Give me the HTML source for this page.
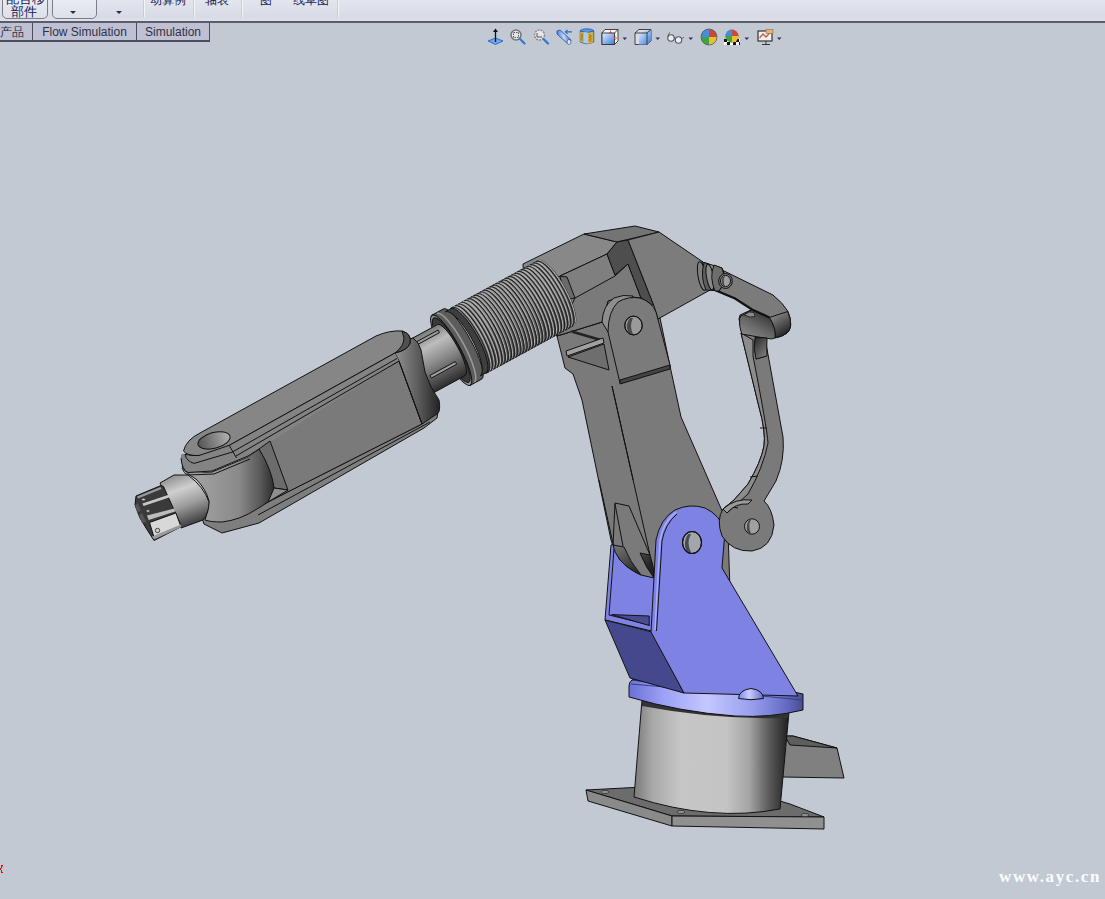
<!DOCTYPE html>
<html><head><meta charset="utf-8">
<style>
html,body{margin:0;padding:0;width:1105px;height:899px;overflow:hidden;background:#c3c9d3;font-family:"Liberation Sans",sans-serif;}
#tb{position:absolute;left:0;top:0;width:1105px;height:21px;background:linear-gradient(#e4e6ee 0%,#d8dae6 80%,#dfe1ea 100%);border-bottom:2px solid #5a5e6a;}
.btn{position:absolute;top:-6px;height:25px;border:1px solid #7a7e88;border-radius:5px;background:linear-gradient(#eceef4,#dde0ea);box-sizing:border-box;}
.sep{position:absolute;top:0;width:1px;height:17px;background:#c8ccd6;border-right:1px solid #f4f5f8;}
.arr{position:absolute;top:11px;width:0;height:0;border-left:3px solid transparent;border-right:3px solid transparent;border-top:3px solid #2a2e48;}
.tt{position:absolute;top:-8px;font-size:12px;color:#141a58;white-space:nowrap;}
#tabs{position:absolute;top:23px;left:0;height:19px;}
.tab{position:absolute;top:0;height:17px;background:#bfc0d4;border:1px solid #4a4e5a;border-top:none;border-bottom:2px solid #4a4e5a;box-sizing:content-box;font-size:12px;color:#2e3144;line-height:19px;text-align:center;}
#vt{position:absolute;top:27px;left:483px;}
svg{position:absolute;left:0;top:0;}
</style></head>
<body>
<div id="tb">
  <div class="btn" style="left:2px;width:46px;"></div>
  <div class="tt" style="left:6px;top:-10px;font-size:13px;">配合移</div>
  <div class="tt" style="left:11px;top:3px;font-size:13px;">部件</div>
  <div class="btn" style="left:52px;width:45px;"></div>
  <div class="arr" style="left:70px;"></div>
  <div class="arr" style="left:116px;"></div>
  <div class="sep" style="left:143px;"></div>
  <div class="tt" style="left:150px;">动算例</div>
  <div class="sep" style="left:193px;"></div>
  <div class="tt" style="left:205px;">轴表</div>
  <div class="sep" style="left:241px;"></div>
  <div class="tt" style="left:260px;">图</div>
  <div class="tt" style="left:293px;">线草图</div>
  <div class="sep" style="left:337px;"></div>
</div>
<div id="tabs">
  <div class="tab" style="left:-5px;width:36px;text-align:left;text-indent:4px;">产品</div>
  <div class="tab" style="left:32px;width:103px;">Flow Simulation</div>
  <div class="tab" style="left:136px;width:72px;">Simulation</div>
</div>
<svg id="icons" width="320" height="24" viewBox="480 26 320 24" style="position:absolute;left:480px;top:26px;">
<defs>
<linearGradient id="iB" x1="0" y1="0" x2="1" y2="1"><stop offset="0" stop-color="#e8f2ff"/><stop offset="1" stop-color="#3a7ad8"/></linearGradient>
<linearGradient id="iB2" x1="0" y1="0" x2="1" y2="0"><stop offset="0" stop-color="#4a86e0"/><stop offset="0.5" stop-color="#bcd8ff"/><stop offset="1" stop-color="#3a6ac8"/></linearGradient>
</defs>
<!-- 1 axis plane -->
<polygon points="488,41 495.5,38 503,41 495.5,44.5" fill="#6aa8f0" stroke="#2a5ab0" stroke-width="0.8"/>
<line x1="495.5" y1="42" x2="495.5" y2="30" stroke="#111" stroke-width="1.3"/>
<polygon points="493,32 495.5,28.5 498,32" fill="#111"/>
<!-- 2 zoom fit -->
<circle cx="516" cy="35" r="5" fill="#e6e6ea" stroke="#777" stroke-width="1.6"/>
<rect x="513.5" y="32.5" width="5" height="5" fill="none" stroke="#444" stroke-width="0.9" stroke-dasharray="1.5 1"/>
<line x1="520" y1="39" x2="524.5" y2="43.5" stroke="#3a78d0" stroke-width="2.4" stroke-linecap="round"/>
<!-- 3 zoom area -->
<circle cx="539.5" cy="35" r="5" fill="#e6e6ea" stroke="#888" stroke-width="1.4" stroke-dasharray="2 1"/>
<path d="M537,33 v4 h5" fill="none" stroke="#444" stroke-width="0.9"/>
<line x1="543.5" y1="39" x2="548" y2="43.5" stroke="#3a78d0" stroke-width="2.4" stroke-linecap="round"/>
<!-- 4 previous view -->
<path d="M557,31 L560,30 L571,40 Q571,44 568,44 L557,34 Z" fill="url(#iB2)" stroke="#2a4a90" stroke-width="0.8"/>
<ellipse cx="569" cy="42" rx="2" ry="2.5" fill="#dbeaff" stroke="#2a4a90" stroke-width="0.6"/>
<path d="M572,31.8 L565.5,31.8 M567.5,29.8 L565.5,31.8 L567.5,33.8" fill="none" stroke="#2a6ad0" stroke-width="1.2"/>
<!-- 5 section -->
<ellipse cx="587" cy="31" rx="6.8" ry="2.2" fill="#5a9ae8" stroke="#2a4a90" stroke-width="0.7"/>
<path d="M580.2,31 L580.2,42 Q587,45.5 593.8,42 L593.8,31 Q587,34 580.2,31 Z" fill="#7ab0f0" stroke="#2a4a90" stroke-width="0.7"/>
<path d="M583.5,32 L588.2,32.5 L588.2,43.5 L583.5,43 Z" fill="#a8ccf8"/>
<path d="M580.4,32 L583.5,32.5 L583.5,42.5 L580.4,41.5 Z" fill="#e0b020"/>
<path d="M588.2,33 L592.8,32.2 L592.8,42.5 L588.2,44 Z" fill="#e0b020"/>
<path d="M581,33.5 l2,1.4 -2,1.4 2,1.4 -2,1.4 2,1.4 M589,34.5 l2.5,1.4 -2.5,1.4 2.5,1.4 -2.5,1.4 2.5,1.4" fill="none" stroke="#8a4a10" stroke-width="0.6"/>
<!-- 6 view orientation -->
<path d="M602,33 L605,29.5 L618,29.5 L618,41 L614.5,44.5 L602,44.5 Z" fill="#f4f4f6" stroke="#333" stroke-width="0.9"/>
<rect x="602" y="33" width="12.5" height="11.5" fill="url(#iB)" stroke="#333" stroke-width="0.9"/>
<path d="M614.5,33 L618,29.5" stroke="#333" stroke-width="0.9"/>
<path d="M610.5,30.5 v3 M609,32 l1.5,1.5 1.5,-1.5 M617,38 h-3 M615.5,36.5 l-1.5,1.5 1.5,1.5" fill="none" stroke="#e03030" stroke-width="0.8"/>
<polygon points="622.5,37.5 627,37.5 624.75,40" fill="#2a2e60"/>
<!-- 7 display style -->
<path d="M635,33 L639,29.5 L651,29.5 L651,41 L647,44.5 L635,44.5 Z" fill="#dadde6" stroke="#333" stroke-width="0.9"/>
<path d="M639,33 L651,29.5 L651,41 L647,44.5 L639,44.5 Z" fill="url(#iB)"/>
<path d="M635,33 L647,33 L651,29.5 M647,33 L647,44.5" fill="none" stroke="#333" stroke-width="0.9"/>
<polygon points="655.5,37.5 660,37.5 657.75,40" fill="#2a2e60"/>
<!-- 8 glasses -->
<circle cx="671" cy="38" r="3.2" fill="#e8eef8" stroke="#555" stroke-width="1.1"/>
<circle cx="678.5" cy="40" r="3.2" fill="#e8eef8" stroke="#555" stroke-width="1.1"/>
<path d="M674,37.5 Q675,37 675.5,39 M668,37 Q668,33 670,32.5 M681.5,39 Q683,37 684,37.5" fill="none" stroke="#555" stroke-width="0.9"/>
<polygon points="688.5,37.5 693,37.5 690.75,40" fill="#2a2e60"/>
<!-- 9 appearance ball -->
<circle cx="709" cy="37" r="8" fill="#c84a3a"/>
<path d="M709,37 L709,29 A8,8 0 0 0 701,37 Z" fill="#4a8ae0"/>
<path d="M709,37 L701,37 A8,8 0 0 0 709,45 Z" fill="#3aa840"/>
<path d="M709,37 L709,45 A8,8 0 0 0 717,37 Z" fill="#e8c030"/>
<circle cx="709" cy="37" r="8" fill="none" stroke="#555" stroke-width="0.7"/>
<!-- 10 scene -->
<rect x="724" y="39" width="16" height="6" fill="#fff"/>
<path d="M724,39 h3 v3 h-3z M730,39 h3 v3 h-3z M736,39 h3 v3 h-3z M727,42 h3 v3 h-3z M733,42 h3 v3 h-3z M739,42 h1 v3 h-1z" fill="#111"/>
<circle cx="732" cy="36" r="6.5" fill="#c84a3a"/>
<path d="M732,36 L732,29.5 A6.5,6.5 0 0 0 725.5,36 Z" fill="#4a8ae0"/>
<path d="M732,36 L725.5,36 A6.5,6.5 0 0 0 732,42.5 Z" fill="#3aa840"/>
<path d="M732,36 L732,42.5 A6.5,6.5 0 0 0 738.5,36 Z" fill="#e8c030"/>
<polygon points="744.5,37.5 749,37.5 746.75,40" fill="#2a2e60"/>
<!-- 11 monitor -->
<rect x="758" y="31" width="14" height="10" fill="#f0f0f2" stroke="#333" stroke-width="1.2"/>
<path d="M759.5,38 L763,34 L766,37 L771,31.5" fill="none" stroke="#c06040" stroke-width="1.3"/>
<rect x="766" y="29.5" width="7" height="4" fill="#e6b070" stroke="#806040" stroke-width="0.5"/>
<path d="M762,44.5 h8 M766,41 v3.5" stroke="#333" stroke-width="1"/>
<polygon points="777,37.5 781.5,37.5 779.25,40" fill="#2a2e60"/>
</svg>
<svg width="1105" height="899" viewBox="0 0 1105 899" id="arm">
<defs>
<linearGradient id="gCyl" gradientUnits="userSpaceOnUse" x1="634" y1="0" x2="788" y2="0">
 <stop offset="0" stop-color="#7a7a7a"/><stop offset="0.12" stop-color="#a8a8a8"/><stop offset="0.3" stop-color="#c6c6c6"/><stop offset="0.6" stop-color="#c4c4c4"/><stop offset="0.75" stop-color="#a4a4a4"/><stop offset="0.87" stop-color="#5e5e5e"/><stop offset="1" stop-color="#222"/>
</linearGradient>
<linearGradient id="gFl" gradientUnits="userSpaceOnUse" x1="629" y1="0" x2="803" y2="0">
 <stop offset="0" stop-color="#6a70d6"/><stop offset="0.2" stop-color="#9ca2f6"/><stop offset="0.45" stop-color="#c4c7ff"/><stop offset="0.7" stop-color="#9aa0ee"/><stop offset="0.9" stop-color="#666cc4"/><stop offset="1" stop-color="#484c94"/>
</linearGradient>
<linearGradient id="gKn" x1="0" y1="0" x2="1" y2="0">
 <stop offset="0" stop-color="#a2a2a2"/><stop offset="0.4" stop-color="#8a8a8a"/><stop offset="0.8" stop-color="#505050"/><stop offset="1" stop-color="#2a2a2a"/>
</linearGradient>
<linearGradient id="gKnL" gradientUnits="userSpaceOnUse" x1="195" y1="0" x2="274" y2="0">
 <stop offset="0" stop-color="#a2a2a2"/><stop offset="0.55" stop-color="#8a8a8a"/><stop offset="0.82" stop-color="#5a5a5a"/><stop offset="1" stop-color="#2e2e2e"/>
</linearGradient>
<linearGradient id="gCap" gradientUnits="userSpaceOnUse" x1="398" y1="0" x2="440" y2="0">
 <stop offset="0" stop-color="#8a8a8a"/><stop offset="0.5" stop-color="#5a5a5a"/><stop offset="1" stop-color="#222"/>
</linearGradient>
<linearGradient id="gShaft" gradientUnits="userSpaceOnUse" x1="428" y1="325" x2="452" y2="390">
 <stop offset="0" stop-color="#8a8a8a"/><stop offset="0.3" stop-color="#c4c4c4"/><stop offset="0.65" stop-color="#7a7a7a"/><stop offset="1" stop-color="#333"/>
</linearGradient>
<linearGradient id="gWr" gradientUnits="userSpaceOnUse" x1="172" y1="474" x2="192" y2="528">
 <stop offset="0" stop-color="#8a8a8a"/><stop offset="0.3" stop-color="#cfcfcf"/><stop offset="0.6" stop-color="#9a9a9a"/><stop offset="1" stop-color="#2e2e2e"/>
</linearGradient>
<linearGradient id="gThr" gradientUnits="userSpaceOnUse" x1="495" y1="285" x2="530" y2="350">
 <stop offset="0" stop-color="#8c8c8c"/><stop offset="0.5" stop-color="#6e6e6e"/><stop offset="1" stop-color="#3a3a3a"/>
</linearGradient>
<linearGradient id="gDark" x1="0" y1="0" x2="1" y2="1">
 <stop offset="0" stop-color="#5a5a5a"/><stop offset="1" stop-color="#2c2c2c"/>
</linearGradient>
<linearGradient id="gArmBot" gradientUnits="userSpaceOnUse" x1="610" y1="530" x2="650" y2="580">
 <stop offset="0" stop-color="#7a7a7a"/><stop offset="1" stop-color="#2e2e2e"/>
</linearGradient>
</defs>
<style>
#arm .o{stroke:#121212;stroke-width:1;stroke-linejoin:round;}
#arm .l{fill:none;stroke:#121212;stroke-width:1;}
.ring{fill:none;stroke:#262626;stroke-width:1.2;}
</style>

<!-- right wedge behind base -->
<polygon class="o" points="785,736 793,736 837,748 844,778 782,777" fill="#808080"/>
<polygon class="o" points="785,736 793,736 837,748 790,745" fill="#5e5e5e"/>

<!-- base plate -->
<polygon class="o" points="586,790 720,783 790,804 824,817 672,816" fill="#6c6c6c"/>
<polygon class="o" points="586,790 672,816 672,826 588,801" fill="#8a8a8a"/>
<polygon class="o" points="672,816 824,817 824,829 672,826" fill="#909090"/>
<ellipse cx="605" cy="792" rx="4" ry="1.5" fill="#999" stroke="#222" stroke-width="0.7"/>
<ellipse cx="681" cy="812" rx="4" ry="1.5" fill="#999" stroke="#222" stroke-width="0.7"/>
<ellipse cx="805" cy="815" rx="4" ry="1.5" fill="#999" stroke="#222" stroke-width="0.7"/>

<!-- cylinder -->
<path class="o" d="M642,700 L789,712 L780,809 Q712,822 634,797 Z" fill="url(#gCyl)"/>
<path d="M642,706 Q716,720 788,718 L789,712 L642,700 Z" fill="#333"/>

<!-- flange -->
<path class="o" d="M632,680 Q640,677 660,676 Q740,678 803,694 L803,710 Q770,718 735,716 Q680,712 629,697 L629,686 Q629,682 632,680 Z" fill="url(#gFl)"/>
<path d="M631,684 Q700,690 803,700" fill="none" stroke="#3a3e80" stroke-width="1"/>
<path d="M632,680 Q660,683 684,693" fill="none" stroke="#2a2e70" stroke-width="1"/>

<!-- lower arm (side & front) -->
<polygon class="o" points="557,336 602,322 660,318 670,366 681,417 723,513 728,532 730,590 651,578 630,570 616,556 611,540 582,400 573,374 565,368" fill="#7a7a7a"/>
<polyline class="l" points="612,386 650,555"/>
<!-- blue pedestal back frame -->
<polygon class="o" points="605,620 611,545 660,532 656,632" fill="#7e82e2"/>
<polyline class="l" points="609,615 614,549"/>
<polyline class="l" points="609,615 650,625"/>
<polygon class="o" points="611.6,614.6 649.2,616 649.2,625.5" fill="#4a4c92"/>
<path d="M599,480 L612,539 Q614,550 620,560 Q628,569 641,575 L654,578 L662,545 L664,480 Z" fill="#7a7a7a"/>
<path class="l" d="M599,480 L612,539 Q614,550 620,560 Q628,569 641,575 L654,578"/>
<linearGradient id="gCres" gradientUnits="userSpaceOnUse" x1="618" y1="548" x2="638" y2="575"><stop offset="0" stop-color="#6e6e6e"/><stop offset="1" stop-color="#222"/></linearGradient>
<path class="o" d="M613,545 L624,547 Q630,562 641,575 Q628,569 620,560 Q614,552 613,545 Z" fill="url(#gCres)"/>
<path class="o" d="M640,553 L650,555 Q654,566 654,578 Q646,568 640,553 Z" fill="url(#gCres)"/>
<polyline class="l" points="613,545 615,503 629,506 650,555"/>
<polyline class="l" points="623,546 615,504"/>
<polyline class="l" points="612,386 650,555"/>
<!-- blue pedestal front -->
<polygon class="o" points="605,620 652,632 684,693 630,678" fill="#46488e"/>
<path class="o" d="M651,632 L656,540 Q660,519 675,510 Q690,503 705,508 Q720,515 725,531 L722,568 L798,696 L684,693 Z" fill="#7e82e2"/>
<path d="M655,630 L660,541 Q663,522 676,512" fill="none" stroke="#a8acf8" stroke-width="1.6"/>
<path class="l" d="M656.5,631 L662,541 Q665,524 677,514"/>
<ellipse class="o" cx="692" cy="542.5" rx="9.5" ry="11" fill="#a4a4ac"/>
<path d="M688,534 Q683,542 686,550 Q689,553 691,552 Q686,543 691,534 Z" fill="#4a4a55"/>
<ellipse cx="692" cy="542.5" rx="9.5" ry="11" fill="none" stroke="#111" stroke-width="1.2"/>
<!-- dome bolt -->
<linearGradient id="gDome" gradientUnits="userSpaceOnUse" x1="740" y1="0" x2="763" y2="0"><stop offset="0" stop-color="#8a90ee"/><stop offset="0.4" stop-color="#c8ccff"/><stop offset="1" stop-color="#6a70c8"/></linearGradient>
<path class="o" d="M738.5,698.5 Q739,690 751,688.5 Q763,690 763.5,698.5 Q751,701 738.5,698.5 Z" fill="url(#gDome)"/>

<!-- right link -->
<path class="o" d="M741,333 L759,407 Q766,432 764,446 Q761,462 748,484 L734,500 L723,509 Q716,520 722,536 Q732,552 752,551 Q772,548 774,525 Q772,508 764,501 L776,481 Q785,460 783,437 L765,338 Z" fill="#7a7a7a"/>
<path class="o" d="M741,333 L759,407 Q766,432 764,446 Q761,462 748,484 L734,500 L723,509 L727,513 L748,494 Q763,468 768,443 Q767,428 753,356 L753,340 Z" fill="#8c8c8c"/>
<polyline class="l" points="756,359 766,356"/>
<polyline class="l" points="760,428 767,428"/>
<polyline class="l" points="750,477 758,476"/>
<polyline class="l" points="727,506 738,508"/>
<path class="o" d="M723,509 Q735,498 752,500 L748,504 Q735,503 727,513 Z" fill="#9a9a9a"/>
<ellipse class="o" cx="752" cy="526.5" rx="7.5" ry="7.7" fill="#a0a0a0"/>
<path d="M749,520 Q745,526 748,533 Q750,534 751,533.5 Q747.5,526 751,519.5 Z" fill="#4a4a4a"/>
<!-- top arm of link -->
<path class="o" d="M720,269 L773,295 Q783,303 788,311.5 Q791,318 790.7,325 Q790,331 787,333 Q782,337 775,338 L742,334 L739,319 L740,315 L752,309.5 L735,298.5 L716,290.5 Z" fill="#7b7b7b"/>
<linearGradient id="gUnd" gradientUnits="userSpaceOnUse" x1="765" y1="312" x2="750" y2="338"><stop offset="0" stop-color="#353535"/><stop offset="0.6" stop-color="#6a6a6a"/><stop offset="1" stop-color="#858585"/></linearGradient>
<path class="o" d="M739.5,319 Q740,315 743,315 L746,313.5 L752,309.5 L769.5,317.5 Q776,328 775.4,337.5 L771.7,339 L759.5,337.2 L741.7,334 Q739,326 739.5,319 Z" fill="url(#gUnd)"/>
<path d="M744,315 L749,312 L754,312.5 L755,316.5 L750,317 Z" fill="#8a8a8a" stroke="#111" stroke-width="0.7"/>
<linearGradient id="gCapL" gradientUnits="userSpaceOnUse" x1="775" y1="313" x2="789" y2="334"><stop offset="0" stop-color="#8a8a8a"/><stop offset="1" stop-color="#1e1e1e"/></linearGradient>
<path class="o" d="M769.5,317.5 L787.6,311.5 Q791,318 790.7,325 Q790,331 787,333 Q782,337 775.4,337.5 Q776,328 769.5,317.5 Z" fill="url(#gCapL)"/>
<polyline points="716,290.5 735,298.5 752,309.5 769.5,317.5" fill="none" stroke="#111" stroke-width="2.2"/>
<linearGradient id="gRodT" gradientUnits="userSpaceOnUse" x1="755" y1="337" x2="770" y2="350"><stop offset="0" stop-color="#2a2a2a"/><stop offset="1" stop-color="#7a7a7a"/></linearGradient>
<path class="o" d="M755,337.5 L767,338 Q766.5,348 767,356 L756,359 Q753,348 755,337.5 Z" fill="url(#gRodT)"/>
<!-- elbow housing -->
<polygon class="o" points="523,264 584,234 617,242 607,254 560,276 540,292 525,300" fill="#888888"/>
<polygon class="o" points="584,234 635,226 659,232 617,242" fill="#747474"/>
<polygon class="o" points="560,276 607,254 615,275 628,264 641,298 623,296 608,301 602,322 557,336 530,320 540,292" fill="#7f7f7f"/>
<polygon class="o" points="575,298 615,276 628,264 641,298 623,296 608,301 602,322 557,336" fill="#7a7a7a"/>
<polygon class="o" points="560,276 567,277 575,298 565,300" fill="#6a6a6a"/>
<polygon class="o" points="607,254 617,242 628,240 654,306 641,298 628,264 615,275" fill="#4e4e4e"/>
<polygon class="o" points="628,240 659,232 703,262 710,290 658,319 654,306" fill="#7c7c7c"/>
<!-- pin -->
<linearGradient id="gPin" gradientUnits="userSpaceOnUse" x1="0" y1="262" x2="0" y2="291"><stop offset="0" stop-color="#8a8a8a"/><stop offset="0.5" stop-color="#9a9a9a"/><stop offset="1" stop-color="#3a3a3a"/></linearGradient>
<path class="o" d="M702,262 L722,268 Q729,280 719,291 L708,290 Z" fill="url(#gPin)"/>
<ellipse class="o" cx="702" cy="276" rx="4" ry="14.5" transform="rotate(-10 702 276)" fill="#7e7e7e"/>
<path class="o" d="M704,262.5 L709,264 Q705,277 711,290.5 L706,290 Q700,277 704,262.5 Z" fill="#5e5e5e"/>
<ellipse class="o" cx="710" cy="277" rx="3.5" ry="13" transform="rotate(-10 710 277)" fill="#8a8a8a"/>
<path class="o" d="M714,265 Q709,277 715,291 L719,291 Q727,282 722,268 Z" fill="#6e6e6e"/>
<ellipse class="o" cx="725.5" cy="281" rx="6.8" ry="7.5" fill="#7b7b7b"/>
<ellipse class="o" cx="725.5" cy="281" rx="5" ry="5.6" fill="#a0a0a0"/>
<path d="M723,277 Q720.5,281 723,285.5 Q724,286.5 725,286 Q722.5,281 725,276 Z" fill="#4a4a4a"/>
<!-- clevis -->
<path class="o" d="M602,322 Q603,305 614,298 Q623,294 633,296 L608,332 Z" fill="#8e8e8e"/>
<path class="o" d="M608,332 Q608,312 618,302 Q628,296 640,298 Q652,302 656,312 L670,365 L670,368 L620,383 Z" fill="#7b7b7b"/>
<polygon class="o" points="620,380 670,365 670,369 620,384" fill="#444"/>
<ellipse class="o" cx="633.5" cy="325.5" rx="8.7" ry="9.4" fill="#9a9a9a"/>
<path d="M630,318 Q625,324 628,332 Q631,335 633,334 Q629,326 633,318 Z" fill="#4a4a4a"/>
<ellipse cx="633.5" cy="325.5" rx="8.7" ry="9.4" fill="none" stroke="#111" stroke-width="1"/>
<!-- under-thread plate bits -->
<polygon points="571,330 602,339 603,342 572,333" fill="#222"/>
<polygon class="o" points="566,351 603,338 604,343 567,356" fill="#a0a0a0"/>
<polygon class="o" points="568,357 604,344 609,370" fill="#6e6e6e"/>

<linearGradient id="gSh2" gradientUnits="userSpaceOnUse" x1="419.0" y1="334.7" x2="446.8" y2="385.6"><stop offset="0" stop-color="#7a7a7a"/><stop offset="0.25" stop-color="#bdbdbd"/><stop offset="0.55" stop-color="#8a8a8a"/><stop offset="1" stop-color="#2c2c2c"/></linearGradient>
<linearGradient id="gTh2" gradientUnits="userSpaceOnUse" x1="494.2" y1="284.6" x2="529.6" y2="349.5"><stop offset="0" stop-color="#a0a0a0"/><stop offset="0.45" stop-color="#888888"/><stop offset="1" stop-color="#464646"/></linearGradient>
<ellipse class="o" cx="451.3" cy="350.1" rx="40" ry="9" transform="rotate(61.4 451.3 350.1)" fill="#8e8e8e"/>
<ellipse class="o" cx="451.3" cy="350.1" rx="36.5" ry="8.2" transform="rotate(61.4 451.3 350.1)" fill="#3a3a3a"/>
<path class="o" d="M432.2,315.0 L443.6,308.8 A40,9 61.4 0 1 481.9,379.0 L470.5,385.2 A40,9 61.4 0 0 432.2,315.0 Z" fill="#5c5c5c"/>
<path d="M437.0,313.5 A39,9 61.4 0 1 474.4,381.9" fill="none" stroke="#9a9a9a" stroke-width="1.6"/>
<path class="o" d="M445.3,311.8 L451.8,308.2 A36.5,10.5 61.4 0 1 486.8,372.3 L480.2,375.9 A36.5,10.5 61.4 0 0 445.3,311.8 Z" fill="#3e3e3e"/>
<path class="o" d="M399.7,345.2 L437.4,324.6 A29,7 61.4 0 1 465.2,375.6 L427.5,396.1 A29,7 61.4 0 0 399.7,345.2 Z" fill="url(#gSh2)"/>
<polygon class="o" points="412.6,343.9 438.1,330.0 439.5,332.6 414.0,346.5" fill="#9a9a9a" stroke-width="0.8"/>
<polygon class="o" points="429.9,375.5 455.3,361.6 456.7,364.2 431.3,378.1" fill="#a0a0a0" stroke-width="0.8"/>
<path class="o" d="M450.3,308.5 L538.1,260.6 A37,10.5 61.4 0 1 573.5,325.6 L485.7,373.5 A37,10.5 61.4 0 0 450.3,308.5 Z" fill="url(#gTh2)"/>
<path d="M453.4,306.8 A37,10.5 61.4 0 1 488.9,371.8" fill="none" stroke="#b8b8b8" stroke-width="1.0"/>
<path d="M452.0,307.6 A37,10.5 61.4 0 1 487.5,372.5" fill="none" stroke="#222" stroke-width="1.2"/>
<path d="M456.6,305.1 A37,10.5 61.4 0 1 492.0,370.1" fill="none" stroke="#b8b8b8" stroke-width="1.0"/>
<path d="M455.2,305.9 A37,10.5 61.4 0 1 490.6,370.8" fill="none" stroke="#222" stroke-width="1.2"/>
<path d="M459.7,303.4 A37,10.5 61.4 0 1 495.1,368.4" fill="none" stroke="#b8b8b8" stroke-width="1.0"/>
<path d="M458.3,304.2 A37,10.5 61.4 0 1 493.7,369.1" fill="none" stroke="#222" stroke-width="1.2"/>
<path d="M462.8,301.7 A37,10.5 61.4 0 1 498.2,366.7" fill="none" stroke="#b8b8b8" stroke-width="1.0"/>
<path d="M461.4,302.5 A37,10.5 61.4 0 1 496.8,367.4" fill="none" stroke="#222" stroke-width="1.2"/>
<path d="M465.9,300.0 A37,10.5 61.4 0 1 501.4,364.9" fill="none" stroke="#b8b8b8" stroke-width="1.0"/>
<path d="M464.5,300.7 A37,10.5 61.4 0 1 500.0,365.7" fill="none" stroke="#222" stroke-width="1.2"/>
<path d="M469.0,298.3 A37,10.5 61.4 0 1 504.5,363.2" fill="none" stroke="#b8b8b8" stroke-width="1.0"/>
<path d="M467.6,299.0 A37,10.5 61.4 0 1 503.1,364.0" fill="none" stroke="#222" stroke-width="1.2"/>
<path d="M472.2,296.6 A37,10.5 61.4 0 1 507.6,361.5" fill="none" stroke="#b8b8b8" stroke-width="1.0"/>
<path d="M470.8,297.3 A37,10.5 61.4 0 1 506.2,362.3" fill="none" stroke="#222" stroke-width="1.2"/>
<path d="M475.3,294.9 A37,10.5 61.4 0 1 510.7,359.8" fill="none" stroke="#b8b8b8" stroke-width="1.0"/>
<path d="M473.9,295.6 A37,10.5 61.4 0 1 509.3,360.6" fill="none" stroke="#222" stroke-width="1.2"/>
<path d="M478.4,293.2 A37,10.5 61.4 0 1 513.8,358.1" fill="none" stroke="#b8b8b8" stroke-width="1.0"/>
<path d="M477.0,293.9 A37,10.5 61.4 0 1 512.4,358.9" fill="none" stroke="#222" stroke-width="1.2"/>
<path d="M481.5,291.5 A37,10.5 61.4 0 1 517.0,356.4" fill="none" stroke="#b8b8b8" stroke-width="1.0"/>
<path d="M480.1,292.2 A37,10.5 61.4 0 1 515.6,357.2" fill="none" stroke="#222" stroke-width="1.2"/>
<path d="M484.7,289.8 A37,10.5 61.4 0 1 520.1,354.7" fill="none" stroke="#b8b8b8" stroke-width="1.0"/>
<path d="M483.3,290.5 A37,10.5 61.4 0 1 518.7,355.5" fill="none" stroke="#222" stroke-width="1.2"/>
<path d="M487.8,288.1 A37,10.5 61.4 0 1 523.2,353.0" fill="none" stroke="#b8b8b8" stroke-width="1.0"/>
<path d="M486.4,288.8 A37,10.5 61.4 0 1 521.8,353.8" fill="none" stroke="#222" stroke-width="1.2"/>
<path d="M490.9,286.4 A37,10.5 61.4 0 1 526.3,351.3" fill="none" stroke="#b8b8b8" stroke-width="1.0"/>
<path d="M489.5,287.1 A37,10.5 61.4 0 1 524.9,352.1" fill="none" stroke="#222" stroke-width="1.2"/>
<path d="M494.0,284.7 A37,10.5 61.4 0 1 529.5,349.6" fill="none" stroke="#b8b8b8" stroke-width="1.0"/>
<path d="M492.6,285.4 A37,10.5 61.4 0 1 528.1,350.4" fill="none" stroke="#222" stroke-width="1.2"/>
<path d="M497.1,283.0 A37,10.5 61.4 0 1 532.6,347.9" fill="none" stroke="#b8b8b8" stroke-width="1.0"/>
<path d="M495.7,283.7 A37,10.5 61.4 0 1 531.2,348.7" fill="none" stroke="#222" stroke-width="1.2"/>
<path d="M500.3,281.3 A37,10.5 61.4 0 1 535.7,346.2" fill="none" stroke="#b8b8b8" stroke-width="1.0"/>
<path d="M498.9,282.0 A37,10.5 61.4 0 1 534.3,347.0" fill="none" stroke="#222" stroke-width="1.2"/>
<path d="M503.4,279.6 A37,10.5 61.4 0 1 538.8,344.5" fill="none" stroke="#b8b8b8" stroke-width="1.0"/>
<path d="M502.0,280.3 A37,10.5 61.4 0 1 537.4,345.3" fill="none" stroke="#222" stroke-width="1.2"/>
<path d="M506.5,277.9 A37,10.5 61.4 0 1 541.9,342.8" fill="none" stroke="#b8b8b8" stroke-width="1.0"/>
<path d="M505.1,278.6 A37,10.5 61.4 0 1 540.5,343.6" fill="none" stroke="#222" stroke-width="1.2"/>
<path d="M509.6,276.1 A37,10.5 61.4 0 1 545.1,341.1" fill="none" stroke="#b8b8b8" stroke-width="1.0"/>
<path d="M508.2,276.9 A37,10.5 61.4 0 1 543.7,341.9" fill="none" stroke="#222" stroke-width="1.2"/>
<path d="M512.7,274.4 A37,10.5 61.4 0 1 548.2,339.4" fill="none" stroke="#b8b8b8" stroke-width="1.0"/>
<path d="M511.3,275.2 A37,10.5 61.4 0 1 546.8,340.2" fill="none" stroke="#222" stroke-width="1.2"/>
<path d="M515.9,272.7 A37,10.5 61.4 0 1 551.3,337.7" fill="none" stroke="#b8b8b8" stroke-width="1.0"/>
<path d="M514.5,273.5 A37,10.5 61.4 0 1 549.9,338.5" fill="none" stroke="#222" stroke-width="1.2"/>
<path d="M519.0,271.0 A37,10.5 61.4 0 1 554.4,336.0" fill="none" stroke="#b8b8b8" stroke-width="1.0"/>
<path d="M517.6,271.8 A37,10.5 61.4 0 1 553.0,336.8" fill="none" stroke="#222" stroke-width="1.2"/>
<path d="M522.1,269.3 A37,10.5 61.4 0 1 557.5,334.3" fill="none" stroke="#b8b8b8" stroke-width="1.0"/>
<path d="M520.7,270.1 A37,10.5 61.4 0 1 556.1,335.1" fill="none" stroke="#222" stroke-width="1.2"/>
<path d="M525.2,267.6 A37,10.5 61.4 0 1 560.7,332.6" fill="none" stroke="#b8b8b8" stroke-width="1.0"/>
<path d="M523.8,268.4 A37,10.5 61.4 0 1 559.3,333.4" fill="none" stroke="#222" stroke-width="1.2"/>
<path d="M528.4,265.9 A37,10.5 61.4 0 1 563.8,330.9" fill="none" stroke="#b8b8b8" stroke-width="1.0"/>
<path d="M527.0,266.7 A37,10.5 61.4 0 1 562.4,331.7" fill="none" stroke="#222" stroke-width="1.2"/>
<path d="M531.5,264.2 A37,10.5 61.4 0 1 566.9,329.2" fill="none" stroke="#b8b8b8" stroke-width="1.0"/>
<path d="M530.1,265.0 A37,10.5 61.4 0 1 565.5,330.0" fill="none" stroke="#222" stroke-width="1.2"/>
<path d="M534.6,262.5 A37,10.5 61.4 0 1 570.0,327.5" fill="none" stroke="#b8b8b8" stroke-width="1.0"/>
<path d="M533.2,263.3 A37,10.5 61.4 0 1 568.6,328.3" fill="none" stroke="#222" stroke-width="1.2"/>
<path d="M537.7,260.8 A37,10.5 61.4 0 1 573.2,325.8" fill="none" stroke="#b8b8b8" stroke-width="1.0"/>
<path d="M536.3,261.6 A37,10.5 61.4 0 1 571.8,326.6" fill="none" stroke="#222" stroke-width="1.2"/>
<!-- forearm -->
<polygon class="o" points="200,512 256,508 422,424 438,412 437,418 424,428 259,523 222,533 204,524" fill="#7e7e7e"/>
<polyline class="l" points="258,515 430,422"/>
<polygon class="o" points="231,446 395,353 399,361 422,424 256,508 233,457" fill="#7a7a7a"/>
<polyline class="l" points="232,452 397,358"/>
<polyline class="l" points="233,456 399,361"/>
<path class="o" d="M395,353 Q403,340 413,338 Q419,342 421,350 L425,372 Q430,388 439,400 Q441,412 437,414 L422,424 L399,361 Z" fill="url(#gCap)"/>
<polyline class="l" points="399,361 422,424"/>
<path class="o" d="M183.5,451 Q186,440 200,433 L376,336 Q390,330 402,331 Q412,334 410,343 Q408,350 395,353 L229.4,445.3 Q214,454 199,455.5 Q187,456 183.5,451 Z" fill="#868686"/>
<path class="o" d="M402,331 Q412,334 410,343 Q408,350 395,353 Q404,346 404,338 Z" fill="#505050"/>
<linearGradient id="gHole" gradientUnits="userSpaceOnUse" x1="198" y1="0" x2="230" y2="0"><stop offset="0" stop-color="#555"/><stop offset="1" stop-color="#b0b0b0"/></linearGradient>
<ellipse class="o" cx="214" cy="440.4" rx="16.5" ry="7.9" transform="rotate(-15 214 440.4)" fill="url(#gHole)"/>
<!-- left knuckle -->
<path class="o" d="M182,466 Q190,474 212,472 L248,457 L259,449 Q266,458 268,466 Q275,480 274,488 Q272,498 268,502 Q262,506 257,509 Q240,520 222,522 Q210,522 205,520 Q208,512 209,501 Q206,489 196,479 Q184,472 182,466 Z" fill="url(#gKnL)"/>
<path d="M181,455 Q183,453 185,454 Q192,456 199,455 L229.4,445.3 L395,353 L399,361 L259,449 L248,457 L212,471 Q195,474 188,473 Q182,468 181,462 Z" fill="#838383"/>
<path class="l" d="M185,454 Q186,461 194,463.4 L232,452.2 L397,358.5"/>
<path class="l" d="M236,456 L399,361"/>
<path class="l" d="M185,454.4 Q192,456 199,455.5 L229.4,445.3 L395,353"/>
<path class="l" d="M181,458 Q182,470 188,472.5 L212,471 L248,456 L259,449"/>
<path class="l" d="M182,468 Q184,474 188,475 L214,474 L250,459"/>
<path class="l" d="M229,445 L236.5,458"/>
<path d="M259,449 L270,441 L288,490 L274,488 Q272,470 259,449 Z" fill="#6c6c6c" stroke="#111" stroke-width="1"/>
<polygon class="o" points="274,488 288,490 268,502" fill="#8e8e8e"/>
<polyline class="l" points="204,520 Q226,528 257,515"/>
<polyline class="l" points="206,525 Q228,532 258,519"/>
<!-- wrist shaft -->
<path class="o" d="M160,483 L174,475 L188,475 Q204,487 209,502 Q209,513 203,520 L181,528 Z" fill="url(#gWr)"/>
<!-- gripper -->
<polygon class="o" points="136,496 161,485.5 163.5,486.5 181.5,526.5 154,540.5 146,528 140,518 135,505" fill="#3a3a3a"/>
<polygon points="137,496.5 160.5,487 161.5,489 138,498.5" fill="#9a9a9a"/>
<polygon points="142.5,503.5 169.5,494.5 170.5,497 143.6,506" fill="#c8c8c8"/>
<polygon points="147,515.5 174.4,508.5 175.1,511.6 148.7,520" fill="#bcbcbc"/>
<polygon class="o" points="149.5,522.5 175.9,513 180.6,525.6 154,537" fill="#d8d8d8"/>
<polygon points="152,536.5 181,524.5 181.5,527 154,539.5" fill="#9a9a9a"/>
<circle cx="157.5" cy="530.5" r="2.2" fill="#cfcfcf" stroke="#222" stroke-width="0.8"/>
<ellipse cx="143.5" cy="499.5" rx="1.8" ry="1.2" fill="#ccc" stroke="#222" stroke-width="0.5"/>
<ellipse cx="148" cy="511" rx="1.8" ry="1.2" fill="#ccc" stroke="#222" stroke-width="0.5"/>
<polygon points="135,505 138,503 141,511 137,512" fill="#555"/>
<polygon points="139,515 142,513 146,522 142,523" fill="#555"/>

</svg>
<div id="wm" style="position:absolute;left:999px;top:867px;font-family:'Liberation Serif',serif;font-weight:bold;font-size:17px;letter-spacing:1.6px;color:#fbfbfd;">www.ayc.cn</div>
<svg width="6" height="12" viewBox="0 864 6 12" style="position:absolute;left:0;top:864px;"><path d="M1,865h2v1.5h-1v2h-1zM0,868h1v2h-1zM1,870h1v2h1v1h-2z" fill="#ff0000"/></svg>
</body></html>
